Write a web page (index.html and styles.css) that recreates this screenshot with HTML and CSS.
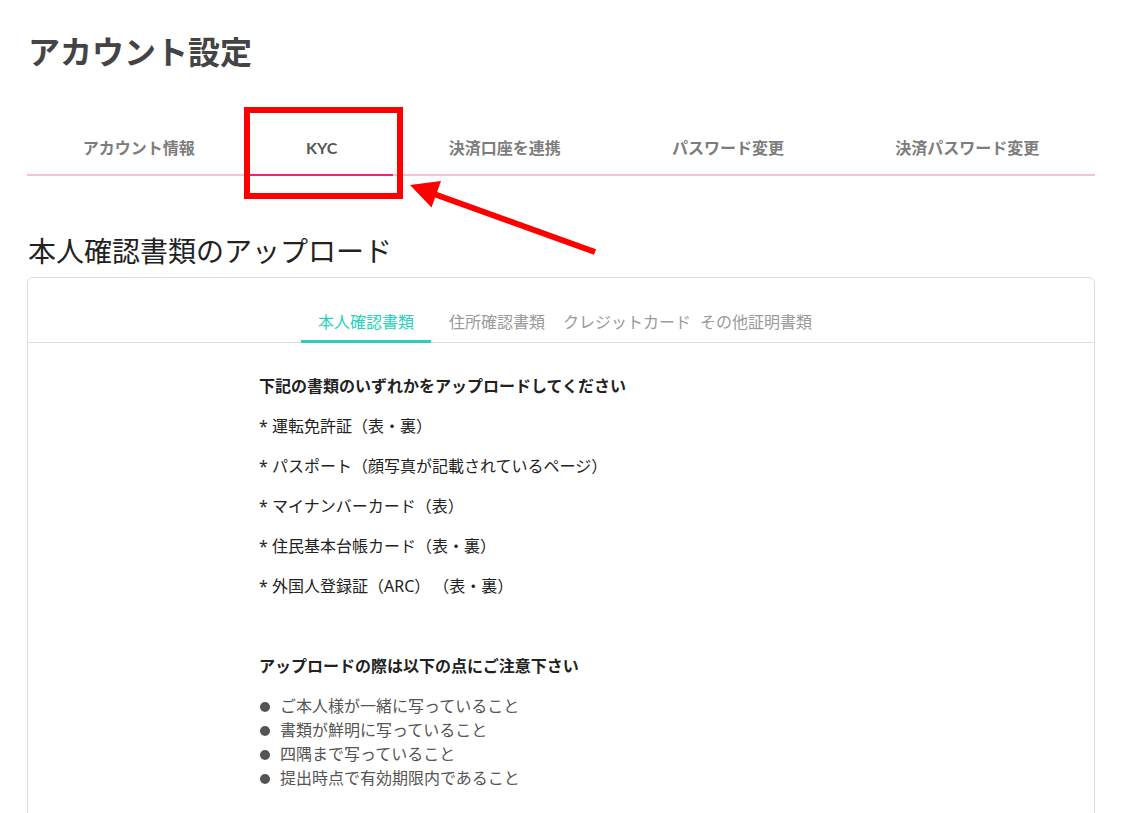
FILE: index.html
```html
<!DOCTYPE html>
<html lang="ja">
<head>
<meta charset="utf-8">
<title>アカウント設定</title>
<link rel="stylesheet" href="styles.css">
</head>
<body>
<main class="page">
  <h1 class="page-title">アカウント設定</h1>
  <nav class="tabs">
    <a class="tab">アカウント情報</a>
    <a class="tab tab-active">KYC</a>
    <a class="tab">決済口座を連携</a>
    <a class="tab">パスワード変更</a>
    <a class="tab">決済パスワード変更</a>
  </nav>

  <h2 class="section-title">本人確認書類のアップロード</h2>

  <section class="card">
    <div class="subtabs">
      <a class="subtab subtab-active">本人確認書類</a>
      <a class="subtab subtab-2">住所確認書類</a>
      <a class="subtab subtab-3">クレジットカード</a>
      <a class="subtab subtab-4">その他証明書類</a>
    </div>
    <div class="card-body">
      <p class="lead">下記の書類のいずれかをアップロードしてください</p>
      <p class="doc">* 運転免許証（表・裏）</p>
      <p class="doc">* パスポート（顔写真が記載されているページ）</p>
      <p class="doc">* マイナンバーカード（表）</p>
      <p class="doc">* 住民基本台帳カード（表・裏）</p>
      <p class="doc doc-last">* 外国人登録証（ARC）<span class="gap"></span>（表・裏）</p>
      <p class="lead">アップロードの際は以下の点にご注意下さい</p>
      <ul class="notes">
        <li>ご本人様が一緒に写っていること</li>
        <li>書類が鮮明に写っていること</li>
        <li>四隅まで写っていること</li>
        <li>提出時点で有効期限内であること</li>
      </ul>
    </div>
  </section>
</main>

<div class="mark-box"></div>
<svg class="mark-arrow" width="1126" height="813" viewBox="0 0 1126 813">
  <line x1="595" y1="252" x2="434" y2="194" stroke="#ff0000" stroke-width="6"/>
  <polygon points="410,185 441,181 431.5,207.6" fill="#ff0000"/>
</svg>
</body>
</html>
```

FILE: styles.css
```css
* {
  box-sizing: border-box;
}

html, body {
  margin: 0;
  padding: 0;
  background: #ffffff;
}

body {
  font-family: "Lato", "Noto Sans CJK JP", sans-serif;
  color: #222222;
  overflow: hidden;
  height: 813px;
}

.page {
  padding: 28px 31px 0 27px;
}

.page-title {
  margin: 0 0 0 1px;
  font-size: 32px;
  line-height: 48px;
  font-weight: 700;
  color: #444444;
}

.tabs {
  display: flex;
  margin-top: 60px;
  border-bottom: 2px solid #fbbfdc;
}

.tab {
  flex: 1 1 auto;
  text-align: center;
  font-size: 16px;
  line-height: 24px;
  font-weight: 700;
  color: #7d7d7d;
  padding: 0 0 14px;
  margin-bottom: -2px;
  border-bottom: 2px solid transparent;
}

.tab-active {
  color: #555555;
  border-bottom-color: #f0246f;
}

.section-title {
  margin: 55px 0 0 1px;
  font-size: 28px;
  line-height: 40px;
  font-weight: 400;
  color: #222222;
}

.card {
  margin-top: 6px;
  border: 1px solid #dddddd;
  border-radius: 6px;
  height: 560px;
}

.subtabs {
  display: flex;
  justify-content: center;
  border-bottom: 1px solid #dddddd;
}

.subtab {
  font-size: 16px;
  line-height: 24px;
  color: #9a9a9a;
  padding: 32px 0 6px;
  margin-bottom: -1px;
  border-bottom: 3px solid transparent;
}

.subtab-active {
  color: #28d2b9;
  padding-left: 17px;
  padding-right: 17px;
  border-bottom-color: #28d2b9;
}

.subtab-2 {
  margin-left: 18px;
}

.subtab-3 {
  margin-left: 18px;
}

.subtab-4 {
  margin-left: 9px;
  padding-right: 9px;
}

.card-body {
  width: 604px;
  margin: 0 auto;
  padding-top: 31px;
}

.card-body p {
  margin: 0 0 16px;
  font-size: 16px;
  line-height: 24px;
}

.lead {
  font-weight: 700;
  color: #222222;
}

.doc {
  font-family: "Noto Sans", "Noto Sans CJK JP", sans-serif;
  color: #222222;
}

.gap {
  display: inline-block;
  width: 3px;
}

.card-body .doc-last {
  margin-bottom: 56px;
}

.notes {
  list-style: none;
  margin: 0;
  padding: 0;
}

.notes li {
  position: relative;
  padding-left: 21px;
  font-size: 16px;
  line-height: 24px;
  color: #555555;
}

.notes li::before {
  content: "";
  position: absolute;
  left: 1px;
  top: 8px;
  width: 10px;
  height: 10px;
  border-radius: 50%;
  background: #555555;
}

.mark-box {
  position: absolute;
  left: 244px;
  top: 107px;
  width: 159px;
  height: 92px;
  border: 6px solid #ff0000;
}

.mark-arrow {
  position: absolute;
  left: 0;
  top: 0;
  pointer-events: none;
}
```
